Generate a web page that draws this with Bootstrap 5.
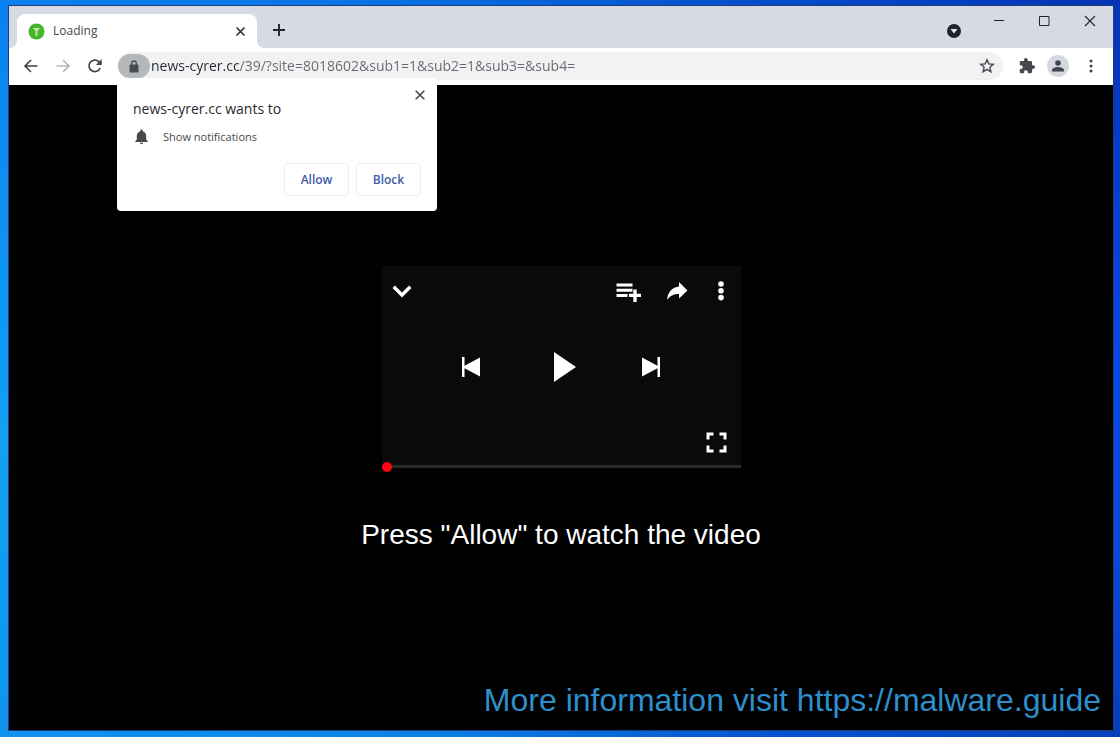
<!DOCTYPE html>
<html lang="en">
<head>
<meta charset="utf-8">
<meta name="viewport" content="width=device-width, initial-scale=1">
<title>Loading</title>
<link href="https://cdn.jsdelivr.net/npm/bootstrap@5.3.0/dist/css/bootstrap.min.css" rel="stylesheet">
<style>
  body {
    font-family: "Open Sans", "Noto Sans", sans-serif;
    padding: 6px 7px 7px 9px;
    background:
      linear-gradient(90deg, #1093ee 0, #0a84e6 35%, #0653cf 70%, #0640bd 100%) bottom / 100% 7px no-repeat,
      linear-gradient(90deg, #0b80f0 0, #0a76e6 30%, #0650cc 65%, #0534b4 100%) top / 100% 6px no-repeat,
      linear-gradient(180deg, #0534b4 0, #0a48e6 50%, #0a48d8 75%, #0640bd 100%) right / 7px 100% no-repeat,
      linear-gradient(180deg, #0b80f0 0, #12a0f4 60%, #1093ee 100%) left / 9px 100% no-repeat,
      #000;
  }
  svg { display: block; flex: none; }
  .tool { --bs-btn-padding-x: 0; --bs-btn-padding-y: 0; --bs-btn-border-width: 0; line-height: 1; color: inherit; flex: none; }
  .window { background: #000; outline: 1px solid #1c3f7a; }
  .tab-strip { background: #d7dae5; height: 42px; padding-left: 8px; color: #20242c; }
  .page-tab { position: relative; width: 240px; height: 34px; padding: 0 11px; background: #fff; border-radius: 8px 8px 0 0; font-size: 12px; color: #45484c; }
  .page-tab::before, .page-tab::after { content: ""; position: absolute; bottom: 0; width: 8px; height: 8px; }
  .page-tab::before { left: -8px; background: radial-gradient(circle at 0 0, transparent 8px, #fff 8px); }
  .page-tab::after { right: -8px; background: radial-gradient(circle at 100% 0, transparent 8px, #fff 8px); }
  .caption-buttons { height: 29px; gap: 33px; padding-right: 17px; }
  .toolbar { background: #fff; height: 37px; padding: 0 14px 1px; color: #3f4246; }
  .address { background: #f1f2f3; height: 28px; border-radius: 14px; margin-left: 15px; }
  .site-info { width: 32px; height: 24px; border-radius: 12px; background: #b5b8ba; color: #484b4f; }
  .url {
    font-size: 14px; line-height: 20px; border: 0; padding: 0; margin-left: 1px; min-width: 0; outline: 0; color: transparent;
    background: linear-gradient(90deg, #26292d 88px, #66696d 88px);
    -webkit-background-clip: text; background-clip: text;
  }
  .avatar { width: 22px; height: 22px; border-radius: 50%; background: #d5d8e0; }
  .toolbar-actions { gap: 10px; margin-left: 14px; }
  .prompt { position: absolute; top: 24px; left: -1px; z-index: 5; width: 320px; height: 133px; padding: 10px 16px 15px; background: #fff; border-radius: 4px; }
  .prompt-title { font-size: 14px; line-height: 20px; color: #26292d; margin-top: 11px; }
  .prompt-item { font-size: 11px; line-height: 16px; color: #45484c; gap: 13px; margin-top: 10px; }
  .choices { gap: 7px; }
  .choice { width: 65px; height: 33px; padding: 0; font-size: 12px; font-weight: 600; color: #3f5ba9; border: 1px solid #eceef1; border-radius: 4px; background: #fff; }
  .page-view { padding-top: 181px; padding-right: 12px; padding-left: 12px; color: #fff; }
  .player { width: 359px; max-width: 100%; height: 199px; background: #0a0a0a; padding: 14px 14px 12px 10px; }
  .player-menu { gap: 25px; padding-right: 2px; }
  .transport { gap: 66px; padding-left: 3px; }
  .seek { width: 359px; max-width: 100%; height: 3px; margin: 0; appearance: none; background: #2b2b2b; }
  .seek::-webkit-slider-thumb { appearance: none; width: 10px; height: 10px; border-radius: 50%; background: #fb0414; }
  .seek::-moz-range-thumb { width: 10px; height: 10px; border: 0; border-radius: 50%; background: #fb0414; }
  .invite { font: 28px/32px "Liberation Sans", Arial, sans-serif; margin: 51px 0 0; }
  .credit { font: 32px/36px "Liberation Sans", Arial, sans-serif; color: #2d8fcc; }
</style>
</head>
<body class="d-flex flex-column min-vh-100">
<div class="window d-flex flex-column flex-grow-1">
  <header>
    <div class="tab-strip d-flex align-items-end">
      <div class="page-tab d-flex align-items-center">
        <svg width="17" height="17" viewBox="0 0 17 17"><circle cx="8.500" cy="8.500" r="8" fill="#46b52c"/><path d="M5 5h7L9.500 8.500V13h-2V8.500z" fill="#b9e8a4"/></svg>
        <span class="ms-2 flex-grow-1">Loading</span>
        <button class="btn tool" type="button" aria-label="Close tab"><svg width="11" height="11" viewBox="0 0 11 11" stroke="#303338" stroke-width="1.700"><path d="M1.500 1.500l8 8M9.500 1.500l-8 8"/></svg></button>
      </div>
      <button class="btn tool ms-3 mb-2 pb-1" type="button" aria-label="New tab"><svg width="12" height="14" viewBox="0 0 12 14" stroke="#20242c" stroke-width="1.900"><path d="M6 2v12M0 8h12"/></svg></button>
      <button class="btn tool ms-auto me-4 pe-2 mb-2" type="button" aria-label="Search tabs"><svg width="16" height="18" viewBox="0 0 16 18"><circle cx="8" cy="9" r="7" fill="#20242c"/><path d="M4.500 7h7L8 11.500z" fill="#e5e7ee"/></svg></button>
      <div class="caption-buttons d-flex align-items-center align-self-start">
        <button class="btn tool" type="button" aria-label="Minimize"><svg width="12" height="12" viewBox="0 0 12 12" stroke="#20242c"><path d="M0 5.500h10"/></svg></button>
        <button class="btn tool" type="button" aria-label="Maximize"><svg width="12" height="12" viewBox="0 0 12 12" stroke="#20242c" fill="none"><path d="M.5 1.500h9.500v9H.5z"/></svg></button>
        <button class="btn tool" type="button" aria-label="Close"><svg width="12" height="12" viewBox="0 0 12 12" stroke="#20242c" stroke-width="1.100"><path d="M1 1l10 10M11 1L1 11"/></svg></button>
      </div>
    </div>
    <div class="toolbar d-flex align-items-center">
      <button class="btn tool" type="button" aria-label="Back"><svg width="16" height="16" viewBox="0 0 16 16" fill="none" stroke="currentColor" stroke-width="1.600"><path d="M14.500 8h-12M8 2L2 8l6 6"/></svg></button>
      <button class="btn tool ms-3" type="button" aria-label="Forward"><svg width="16" height="16" viewBox="0 0 16 16" fill="none" stroke="#b4b6b9" stroke-width="1.600"><path d="M1.500 8h12M8 2l6 6-6 6"/></svg></button>
      <button class="btn tool ms-3" type="button" aria-label="Reload"><svg width="16" height="16" viewBox="0 0 16 16" fill="none" stroke="currentColor" stroke-width="1.700"><path d="M13.200 10A5.800 5.800 0 1 1 12 3.800l1.500 1.700"/><path d="M14.700 1v6H9z" fill="currentColor" stroke="none"/></svg></button>
      <div class="address d-flex align-items-center flex-grow-1">
        <div class="position-relative">
          <button class="btn tool site-info d-flex align-items-center justify-content-center" type="button" aria-label="Site information"><svg width="10" height="13" viewBox="0 0 10 13"><rect x=".5" y="4.500" width="9" height="8" rx="1" fill="currentColor"/><path d="M2.700 5V3.300a2.300 2.300 0 0 1 4.600 0V5" fill="none" stroke="currentColor" stroke-width="1.300"/></svg></button>
          <section class="prompt d-flex flex-column" aria-label="Permission request">
            <button class="btn tool position-absolute top-0 end-0 mt-2 me-2 p-1" type="button" aria-label="Dismiss"><svg width="10" height="10" viewBox="0 0 10 10" stroke="#45484c" stroke-width="1.600"><path d="M.7.700l8.600 8.600M9.300.7L.7 9.300"/></svg></button>
            <div class="prompt-title">news-cyrer.cc wants to</div>
            <div class="prompt-item d-flex align-items-center">
              <svg width="17" height="16" viewBox="0 0 17 16"><path d="M8.500.500c.7 0 1.200.5 1.200 1.200v.5c2.200.6 3.500 2.500 3.500 4.800v3.800l1.500 1.500v.7H2.300v-.7l1.500-1.500V7c0-2.300 1.300-4.200 3.500-4.800v-.5c0-.7.500-1.200 1.200-1.200zM7 13.800h3a1.500 1.500 0 0 1-3 0z" fill="#45484c"/></svg>
              <span>Show notifications</span>
            </div>
            <div class="choices d-flex justify-content-end mt-auto">
              <button class="btn choice" type="button">Allow</button>
              <button class="btn choice" type="button">Block</button>
            </div>
          </section>
        </div>
        <input class="url flex-grow-1" type="text" aria-label="Address" value="news-cyrer.cc/39/?site=8018602&amp;sub1=1&amp;sub2=1&amp;sub3=&amp;sub4=">
        <button class="btn tool me-2" type="button" aria-label="Bookmark"><svg width="16" height="16" viewBox="0 0 16 16" fill="none" stroke="#45484c" stroke-width="1.400"><path d="M8 1.800l1.800 4.100 4.500.4-3.400 3 1 4.400L8 11.400l-3.900 2.300 1-4.400-3.400-3 4.500-.4z"/></svg></button>
      </div>
      <div class="toolbar-actions d-flex align-items-center">
        <button class="btn tool" type="button" aria-label="Extensions"><svg width="20" height="16" viewBox="-1 1 26 22"><path d="M20.500 11H19V7a2 2 0 0 0-2-2h-4V3.500a2.500 2.500 0 0 0-5 0V5H4a2 2 0 0 0-2 2v3.800h1.500a2.700 2.700 0 0 1 0 5.400H2V20a2 2 0 0 0 2 2h3.800v-1.500a2.700 2.700 0 0 1 5.400 0V22H17a2 2 0 0 0 2-2v-4h1.500a2.500 2.500 0 0 0 0-5z" fill="#45484c"/></svg></button>
        <button class="btn tool avatar d-flex align-items-center justify-content-center" type="button" aria-label="Profile"><svg width="14" height="14" viewBox="0 0 14 14" fill="#3f444d"><circle cx="7" cy="4" r="2.800"/><path d="M1 12.500v-1.300C1 9 4.500 8 7 8s6 1 6 3.200v1.300z"/></svg></button>
        <button class="btn tool ms-1" type="button" aria-label="Menu"><svg width="16" height="16" viewBox="0 0 16 16" fill="#3f4246"><circle cx="8" cy="3" r="1.500"/><circle cx="8" cy="8" r="1.500"/><circle cx="8" cy="13" r="1.500"/></svg></button>
      </div>
    </div>
  </header>
  <main class="page-view d-flex flex-column align-items-center flex-grow-1">
    <div class="player d-flex flex-column justify-content-between">
      <div class="player-menu d-flex align-items-center">
        <button class="btn tool me-auto" type="button" aria-label="Collapse"><svg width="20" height="22" viewBox="0 0 20 22" fill="none" stroke="#fff" stroke-width="3.400"><path d="M1.700 6.800L10 15l8.300-8.200"/></svg></button>
        <button class="btn tool" type="button" aria-label="Add to queue"><svg width="26" height="22" viewBox="0 0 26 22" fill="#fff"><path d="M.5 3.500h16v3H.5zM.5 8.700h16v3H.5zM.5 13.900h11v3H.500zM17.300 9.500h3.400v4.200H25v3.200h-4.300V22h-3.400v-5.100H13v-3.200h4.300z"/></svg></button>
        <button class="btn tool" type="button" aria-label="Share"><svg width="21" height="22" viewBox="1 0 21 22"><path d="M13 2l8.500 8.500-8.500 8V14C7.500 14 4 15.800 1 20 1.800 12.500 5.500 7.500 13 6.500z" fill="#fff"/></svg></button>
        <button class="btn tool ms-1" type="button" aria-label="More options"><svg width="8" height="22" viewBox="0 0 8 22" fill="#fff"><circle cx="4" cy="4" r="2.800"/><circle cx="4" cy="10.800" r="2.800"/><circle cx="4" cy="17.600" r="2.800"/></svg></button>
      </div>
      <div class="transport d-flex align-items-center justify-content-center">
        <button class="btn tool" type="button" aria-label="Previous"><svg width="18" height="20" viewBox="0 0 18 20" fill="#fff"><path d="M0 0h2.500v8.800L18 .5v19L2.500 11.200V20H0z"/></svg></button>
        <button class="btn tool" type="button" aria-label="Play"><svg width="30" height="30" viewBox="-8 0 30 30"><path d="M0 0l22 15L0 30z" fill="#fff"/></svg></button>
        <button class="btn tool" type="button" aria-label="Next"><svg width="18" height="20" viewBox="0 0 18 20" fill="#fff"><path d="M0 .5l15.500 8.300V0H18v20h-2.500v-8.800L0 19.500z"/></svg></button>
      </div>
      <button class="btn tool align-self-end" type="button" aria-label="Full screen"><svg width="21" height="21" viewBox="0 0 21 21" fill="none" stroke="#fff" stroke-width="3"><path d="M2 7.500V2h5.500M13.500 2H19v5.500M19 13.500V19h-5.500M7.500 19H2v-5.500"/></svg></button>
    </div>
    <input class="seek" type="range" min="0" max="100" value="0" aria-label="Seek">
    <p class="invite">Press "Allow" to watch the video</p>
    <div class="credit mt-auto align-self-end pb-2 mb-1">More information visit https://malware.guide</div>
  </main>
</div>
<script src="https://cdn.jsdelivr.net/npm/bootstrap@5.3.0/dist/js/bootstrap.bundle.min.js"></script>
</body>
</html>
